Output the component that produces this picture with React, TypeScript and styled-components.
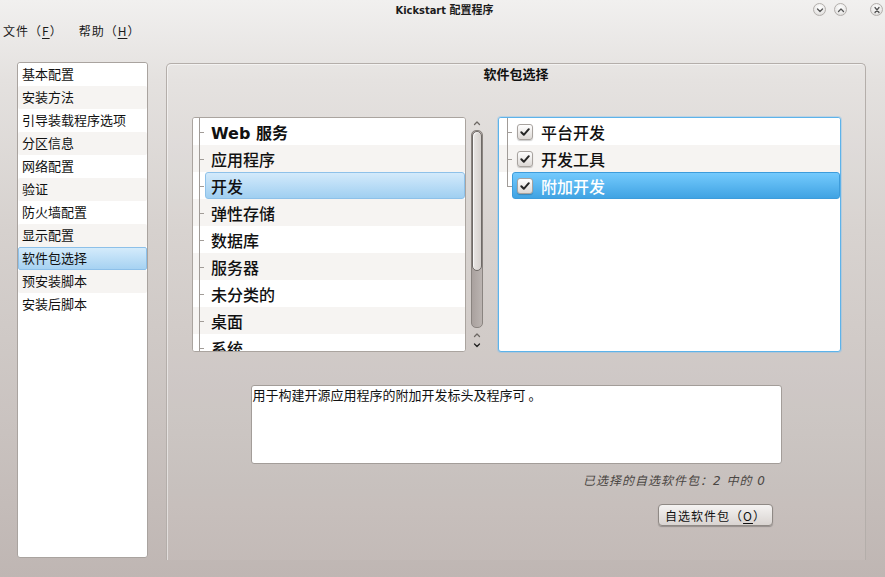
import styled, { createGlobalStyle } from "styled-components";

const GlobalStyle = createGlobalStyle`
  html, body {
    margin: 0;
    padding: 0;
  }
  body {
    font-family: "DejaVu Sans", "Noto Sans CJK SC", sans-serif;
    color: #111;
  }
`;

const sections = [
  "基本配置",
  "安装方法",
  "引导装载程序选项",
  "分区信息",
  "网络配置",
  "验证",
  "防火墙配置",
  "显示配置",
  "软件包选择",
  "预安装脚本",
  "安装后脚本",
];

const categories = ["Web 服务", "应用程序", "开发", "弹性存储", "数据库", "服务器", "未分类的", "桌面", "系统"];
const groups = ["平台开发", "开发工具", "附加开发"];

const Chevron = ({ up, size = 8, color = "#555" }: { up?: boolean; size?: number; color?: string }) => (
  <svg width={size} height={size} viewBox="0 0 8 8">
    <path
      d={up ? "M1.5 5.5 L4 3 L6.5 5.5" : "M1.5 3 L4 5.5 L6.5 3"}
      fill="none"
      stroke={color}
      strokeWidth="1.3"
      strokeLinecap="round"
      strokeLinejoin="round"
    />
  </svg>
);

const CloseGlyph = () => (
  <svg width="8" height="8" viewBox="0 0 8 8">
    <path d="M2 1.5 L6 6.5 M6 1.5 L2 6.5" stroke="#555" strokeWidth="1.3" strokeLinecap="round" />
  </svg>
);

const CheckIcon = () => (
  <svg width="12" height="12" viewBox="0 0 12 12">
    <path d="M2.3 6.3 L4.8 8.8 L9.8 3.2" fill="none" stroke="#262626" strokeWidth="2" strokeLinecap="round" strokeLinejoin="round" />
  </svg>
);

export default function App() {
  return (
    <>
      <GlobalStyle />
      <Window>
        <TitleBar>
          <Title>Kickstart 配置程序</Title>
          <WinButtons>
            <WinButton>
              <Chevron />
            </WinButton>
            <WinButton $gap={8}>
              <Chevron up />
            </WinButton>
            <WinButton $gap={23}>
              <CloseGlyph />
            </WinButton>
          </WinButtons>
        </TitleBar>

        <MenuBar>
          <MenuItem>
            文件（<u>F</u>）
          </MenuItem>
          <MenuItem>
            帮助（<u>H</u>）
          </MenuItem>
        </MenuBar>

        <Body>
          <Sidebar>
            {sections.map((s, i) => (
              <SideItem key={s} $alt={i % 2 === 1} $selected={s === "软件包选择"}>
                {s}
              </SideItem>
            ))}
          </Sidebar>

          <Panel>
            <PanelTitle>软件包选择</PanelTitle>

            <ListsRow>
              <TreeBox>
                {categories.map((c, i) => (
                  <TreeRow key={c} $alt={i % 2 === 1}>
                    <Branch $line={6} />
                    <TreeItem $selected={c === "开发"} $bold={c === "Web 服务"}>
                      {c}
                    </TreeItem>
                  </TreeRow>
                ))}
              </TreeBox>

              <ScrollBar>
                <ArrowSlot>
                  <Chevron up color="#6d6864" />
                </ArrowSlot>
                <Groove>
                  <Handle />
                </Groove>
                <ArrowSlot>
                  <Chevron up color="#6d6864" />
                </ArrowSlot>
                <ArrowSlot>
                  <Chevron color="#222" />
                </ArrowSlot>
              </ScrollBar>

              <GroupBox>
                {groups.map((g, i) => (
                  <TreeRow key={g} $alt={i % 2 === 1}>
                    <Branch $line={8} $last={i === groups.length - 1} $wide />
                    <GroupItem $selected={g === "附加开发"}>
                      <CheckBox>
                        <CheckIcon />
                      </CheckBox>
                      {g}
                    </GroupItem>
                  </TreeRow>
                ))}
              </GroupBox>
            </ListsRow>

            <Description>用于构建开源应用程序的附加开发标头及程序可 。</Description>

            <Status>已选择的自选软件包：2 中的 0</Status>

            <ButtonRow>
              <PushButton>
                自选软件包（<u>O</u>）
              </PushButton>
            </ButtonRow>
          </Panel>
        </Body>
      </Window>
    </>
  );
}

const Window = styled.div`
  width: 885px;
  height: 577px;
  display: flex;
  flex-direction: column;
  overflow: hidden;
  background: linear-gradient(to bottom, #f1f0ef 0%, #e4e1df 14%, #d6d1ce 40%, #c9c2bf 75%, #bfb6b3 100%);
`;

const TitleBar = styled.div`
  height: 18px;
  display: grid;
  grid-template-columns: 1fr auto 1fr;
  align-items: center;
`;

const Title = styled.div`
  grid-column: 2;
  font: bold 11px "DejaVu Sans Condensed", "DejaVu Sans", "Noto Sans CJK SC", sans-serif;
  color: #1c1c1c;
  padding-left: 4px;
`;

const WinButtons = styled.div`
  grid-column: 3;
  justify-self: end;
  display: flex;
  align-items: center;
  padding: 1px 2px 0 0;
`;

const WinButton = styled.span<{ $gap?: number }>`
  width: 13px;
  height: 13px;
  box-sizing: border-box;
  margin-left: ${(p) => p.$gap ?? 0}px;
  display: flex;
  align-items: center;
  justify-content: center;
  border-radius: 50%;
  border: 1px solid #b3afac;
  background: radial-gradient(circle at 50% 35%, #ffffff 0%, #ecebea 55%, #d4d1cf 100%);
`;

const MenuBar = styled.div`
  height: 24px;
  display: flex;
  align-items: center;
  gap: 16px;
  padding-left: 3px;
  font-size: 12px;
  letter-spacing: 1px;
  font-family: "Noto Sans CJK SC", "DejaVu Sans", sans-serif;
`;

const MenuItem = styled.span`
  color: #1a1a1a;
  u {
    text-underline-offset: 2px;
  }
`;

const Body = styled.div`
  flex: 1;
  min-height: 0;
  display: flex;
  gap: 18px;
  padding: 20px 19px 17px 17px;
`;

const Sidebar = styled.ul`
  width: 131px;
  flex: none;
  box-sizing: border-box;
  margin: 0 0 2px;
  padding: 0;
  list-style: none;
  background: #fff;
  border: 1px solid #a9a39f;
  border-radius: 3px;
  overflow: hidden;
`;

const SideItem = styled.li<{ $alt: boolean; $selected: boolean }>`
  height: 23px;
  box-sizing: border-box;
  line-height: 20px;
  padding-left: 3px;
  font-size: 13px;
  font-family: "Noto Sans CJK SC", sans-serif;
  color: #111;
  border: 1px solid ${(p) => (p.$selected ? "#8dc0e9" : "transparent")};
  border-radius: 2px;
  background: ${(p) =>
    p.$selected
      ? "linear-gradient(to bottom, #d4ebfb, #a6d2f2)"
      : p.$alt
        ? "#f6f4f2"
        : "#fff"};
`;

const Panel = styled.section`
  flex: 1;
  margin-top: 1px;
  display: flex;
  flex-direction: column;
  border: 1px solid #b4aeaa;
  border-bottom: none;
  border-radius: 5px 5px 0 0;
  box-shadow: inset 1px 1px 0 rgba(255, 255, 255, 0.5);
  background: rgba(255, 255, 255, 0.05);
`;

const PanelTitle = styled.div`
  height: 24px;
  line-height: 24px;
  text-align: center;
  font: bold 13px "Noto Sans CJK SC", sans-serif;
  color: #111;
`;

const ListsRow = styled.div`
  margin-top: 29px;
  padding: 0 24px 0 25px;
  height: 235px;
  display: flex;
`;

const TreeBox = styled.div`
  width: 274px;
  flex: none;
  box-sizing: border-box;
  background: #fff;
  border: 1px solid #aaa49f;
  border-radius: 3px;
  overflow: hidden;
`;

const GroupBox = styled.div`
  flex: 1;
  margin-left: 14px;
  box-sizing: border-box;
  background: #fff;
  border: 1px solid #5db3ea;
  border-radius: 3px;
  box-shadow: 0 0 0 1px rgba(120, 190, 240, 0.35);
  overflow: hidden;
`;

const TreeRow = styled.div<{ $alt: boolean }>`
  height: 27px;
  display: flex;
  background: ${(p) => (p.$alt ? "#f6f4f2" : "#fff")};
`;

const Branch = styled.div<{ $line: number; $last?: boolean; $wide?: boolean }>`
  width: ${(p) => (p.$wide ? 13 : 12)}px;
  flex: none;
  position: relative;

  &::before {
    content: "";
    position: absolute;
    left: ${(p) => p.$line}px;
    top: 0;
    width: 1px;
    height: ${(p) => (p.$last ? "50%" : "100%")};
    background: #a19c98;
  }

  &::after {
    content: "";
    position: absolute;
    left: ${(p) => p.$line}px;
    top: 50%;
    width: 5px;
    height: 1px;
    background: #a19c98;
  }
`;

const TreeItem = styled.div<{ $selected: boolean; $bold: boolean }>`
  flex: 1;
  display: flex;
  align-items: center;
  padding-left: 5px;
  font-size: 16px;
  font-weight: ${(p) => (p.$bold ? "bold" : "500")};
  font-family: "DejaVu Sans", "Noto Sans CJK SC", sans-serif;
  color: #111;
  border: 1px solid ${(p) => (p.$selected ? "#8ec1e9" : "transparent")};
  border-radius: 3px;
  background: ${(p) => (p.$selected ? "linear-gradient(to bottom, #d3eafb, #a0cff1)" : "transparent")};
`;

const GroupItem = styled.div<{ $selected: boolean }>`
  flex: 1;
  display: flex;
  align-items: center;
  gap: 8px;
  padding-left: 4px;
  font-size: 16px;
  font-weight: 500;
  font-family: "Noto Sans CJK SC", sans-serif;
  color: ${(p) => (p.$selected ? "#fff" : "#111")};
  border: 1px solid ${(p) => (p.$selected ? "#3d9cdb" : "transparent")};
  border-radius: 3px;
  background: ${(p) => (p.$selected ? "linear-gradient(to bottom, #74cafd, #40a3e3)" : "transparent")};
`;

const CheckBox = styled.span`
  width: 16px;
  height: 16px;
  flex: none;
  box-sizing: border-box;
  display: flex;
  align-items: center;
  justify-content: center;
  border: 1px solid #a8a39f;
  border-radius: 3px;
  background: linear-gradient(to bottom, #ffffff, #dcd8d5);
  box-shadow: 0 1px 1px rgba(0, 0, 0, 0.2);
`;

const ScrollBar = styled.div`
  width: 14px;
  flex: none;
  margin-left: 4px;
  display: flex;
  flex-direction: column;
  align-items: center;
`;

const ArrowSlot = styled.div`
  height: 10px;
  display: flex;
  align-items: center;
  justify-content: center;
  &:first-child {
    margin: 1px 0 2px;
  }
`;

const Groove = styled.div`
  width: 12px;
  height: 198px;
  margin-bottom: 2px;
  box-sizing: border-box;
  border: 1px solid #8a8480;
  border-radius: 5px;
  background: linear-gradient(to right, #a9a19e, #bbb4b1);
  overflow: hidden;
`;

const Handle = styled.div`
  height: 140px;
  box-sizing: border-box;
  border: 1px solid #6f6a67;
  border-radius: 5px;
  background: linear-gradient(to right, #e9e6e4, #d6d1ce);
  box-shadow: inset 1px 1px 0 rgba(255, 255, 255, 0.7);
`;

const Description = styled.div`
  width: 531px;
  height: 79px;
  margin: 33px auto 0;
  box-sizing: border-box;
  padding: 0 1px;
  background: #fff;
  border: 1px solid #a39d99;
  border-radius: 3px;
  font: 13px/18px "Noto Sans CJK SC", sans-serif;
  color: #111;
`;

const Status = styled.div`
  margin-top: 9px;
  padding-right: 99px;
  text-align: right;
  font: italic 12px/16px "DejaVu Sans", "Noto Sans CJK SC", sans-serif;
  letter-spacing: 1px;
  color: #4a4643;
`;

const ButtonRow = styled.div`
  margin-top: 15px;
  padding-right: 92px;
  display: flex;
  justify-content: flex-end;
`;

const PushButton = styled.button`
  width: 115px;
  height: 22px;
  padding: 0;
  border: 1px solid #8f8985;
  border-radius: 4px;
  background: linear-gradient(to bottom, #f5f3f2, #d9d4d1);
  box-shadow: 0 1px 1px rgba(0, 0, 0, 0.25);
  font: 12px "Noto Sans CJK SC", "DejaVu Sans", sans-serif;
  letter-spacing: 1px;
  color: #111;
  u {
    text-underline-offset: 2px;
  }
`;
